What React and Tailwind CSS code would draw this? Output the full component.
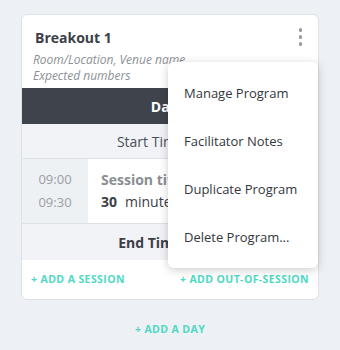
import React from 'react';

const menuItems = ['Manage Program', 'Facilitator Notes', 'Duplicate Program', 'Delete Program...'];

const App = () => {
  return (
    <div className="min-h-[350px] w-[340px] bg-[#edf0f4] pt-[14px] px-[21px] font-['Open_Sans',sans-serif]">
      <div className="relative bg-white border border-[#dde2e7] rounded-md">
        <div className="px-[13px] pt-[13px] pb-1">
          <div className="flex items-center justify-between">
            <h2 className="text-[14px] leading-5 font-bold text-[#3b4048]">Breakout 1</h2>
            <div className="flex flex-col gap-[3.5px] pr-[3px] -mt-[2px]">
              <span className="w-[3.5px] h-[3.5px] rounded-full bg-[#95999f]" />
              <span className="w-[3.5px] h-[3.5px] rounded-full bg-[#95999f]" />
              <span className="w-[3.5px] h-[3.5px] rounded-full bg-[#95999f]" />
            </div>
          </div>
          <p className="mt-1 -ml-[2px] text-[12px] leading-4 italic text-[#8c9096]">Room/Location, Venue name</p>
          <p className="-ml-[2px] text-[12px] leading-4 italic text-[#8c9096]">Expected numbers</p>
        </div>

        <div className="h-9 bg-[#3f444c] flex items-center justify-center text-white text-[14px] font-bold">Day 1</div>

        <div className="h-[35px] bg-[#f1f3f6] border-b border-[#dde2e7] flex items-center justify-center text-[14px] text-[#4a4f57]">Start Time 09:00</div>

        <div className="flex h-[65px] border-b border-[#dde2e7]">
          <div className="w-[66px] bg-[#eef1f4] flex flex-col justify-center items-center text-[13px] leading-[23px] text-[#9a9ea4]">
            <span>09:00</span>
            <span>09:30</span>
          </div>
          <div className="flex-1 flex flex-col justify-center pl-[13px] leading-[22px] text-[14px]">
            <span className="font-bold text-[#8a8e94]">Session title</span>
            <span className="text-[#3b4048]"><b className="mr-2">30</b>minutes</span>
          </div>
        </div>

        <div className="h-9 bg-[#f1f3f6] flex items-center justify-center text-[14px] font-bold text-[#3b4048]">End Time 09:30</div>

        <div className="h-[39px] flex items-center justify-between px-[9px] text-[10.5px] font-bold tracking-[0.4px] text-[#4fd9c3]">
          <span>+ ADD A SESSION</span>
          <span>+ ADD OUT-OF-SESSION</span>
        </div>

        <div className="absolute right-0 top-[47px] w-[150px] bg-white rounded-md shadow-[0_2px_10px_rgba(0,0,0,0.2)] pt-2 pb-1.5">
          {menuItems.map((item) => (
            <div key={item} className="h-12 flex items-center px-4 text-[13px] text-[#33373d]">{item}</div>
          ))}
        </div>
      </div>

      <div className="h-[60px] flex items-center justify-center text-[10.5px] font-bold tracking-[0.4px] text-[#4fd9c3]">+ ADD A DAY</div>
    </div>
  );
};

export default App;
